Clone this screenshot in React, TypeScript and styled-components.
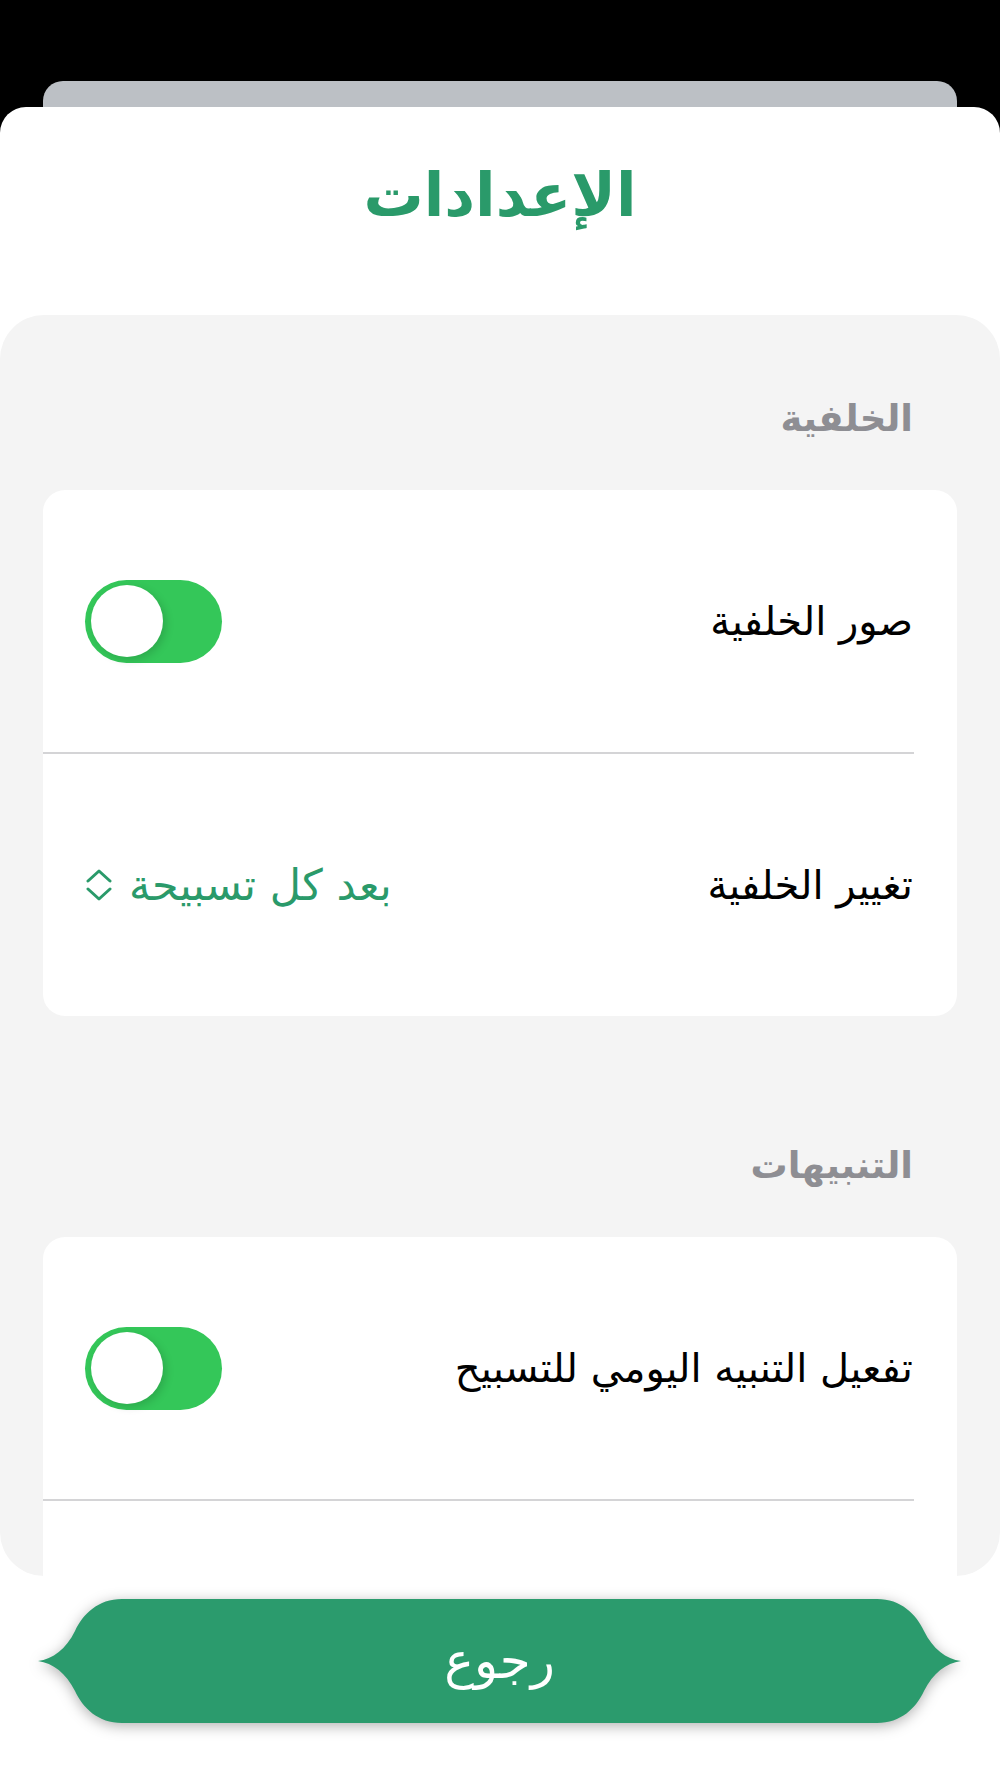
// شاشة الإعدادات

import React, { useState } from "react";
import styled, { createGlobalStyle } from "styled-components";

const GlobalStyle = createGlobalStyle`
  * { box-sizing: border-box; }
  body {
    margin: 0;
    background: #000;
    font-family: "DejaVu Sans", "Noto Sans", sans-serif;
  }
`;

const Toggle = ({ on, onChange }: { on: boolean; onChange: () => void }) => {
    return (
        <Track type="button" $on={on} onClick={onChange}>
            <Knob />
        </Track>
    );
};

const UpDown = () => (
    <svg width="28" height="32" viewBox="0 0 28 32" fill="none">
        <polyline points="3,12 14,2 25,12" stroke="#2a9a6a" strokeWidth="3" strokeLinecap="round" strokeLinejoin="round" />
        <polyline points="3,20 14,30 25,20" stroke="#2a9a6a" strokeWidth="3" strokeLinecap="round" strokeLinejoin="round" />
    </svg>
);

export default () => {
    const [images, setImages] = useState(true);
    const [daily, setDaily] = useState(true);

    return (
        <Page dir="rtl">
            <GlobalStyle />
            <BackCard />
            <Sheet>
                <Header>
                    <Title>الإعدادات</Title>
                </Header>
                <Content>
                    <SectionTitle $first>الخلفية</SectionTitle>
                    <Card>
                        <Row>
                            <Label>صور الخلفية</Label>
                            <Toggle on={images} onChange={() => setImages(!images)} />
                        </Row>
                        <Divider />
                        <Row>
                            <Label>تغيير الخلفية</Label>
                            <Picker type="button">
                                <span>بعد كل تسبيحة</span>
                                <UpDown />
                            </Picker>
                        </Row>
                    </Card>
                    <SectionTitle>التنبيهات</SectionTitle>
                    <Card>
                        <Row>
                            <Label>تفعيل التنبيه اليومي للتسبيح</Label>
                            <Toggle on={daily} onChange={() => setDaily(!daily)} />
                        </Row>
                        <Divider />
                        {/* الصف التالي مخفي تحت حافة القائمة */}
                        <Row />
                    </Card>
                </Content>
                <Footer>
                    <BackButton type="button">
                        <ButtonShape viewBox="0 0 923 124" preserveAspectRatio="none">
                            <path
                                d="M84,0 L839,0 C863,0 878,15 886,32 C895,50 908,60 923,62 C908,64 895,74 886,92 C878,109 863,124 839,124 L84,124 C60,124 45,109 37,92 C28,74 15,64 0,62 C15,60 28,50 37,32 C45,15 60,0 84,0 Z"
                                fill="#2b9b6d"
                            />
                        </ButtonShape>
                        <ButtonText>رجوع</ButtonText>
                    </BackButton>
                </Footer>
            </Sheet>
        </Page>
    );
};

const Page = styled.div`
  min-height: 1778px;
  padding-top: 81px;
  display: flex;
  flex-direction: column;
  background: #000;
`;

const BackCard = styled.div`
  height: 26px;
  margin: 0 43px;
  background: #bcc0c5;
  border-radius: 20px 20px 0 0;
`;

const Sheet = styled.div`
  flex: 1;
  display: flex;
  flex-direction: column;
  background: #fff;
  border-radius: 26px 26px 0 0;
`;

const Header = styled.div`
  height: 208px;
  padding-bottom: 32px;
  display: flex;
  justify-content: center;
  align-items: center;
`;

const Title = styled.h1`
  margin: 0;
  font-size: 60px;
  font-weight: bold;
  color: #2a9a6a;
`;

const Content = styled.div`
  height: 1261px;
  padding: 0 43px;
  background: #f4f4f4;
  border-radius: 44px;
  overflow: hidden;
`;

const SectionTitle = styled.div<{ $first?: boolean }>`
  height: 175px;
  margin-top: ${(p) => (p.$first ? "0" : "46px")};
  padding: 31px 44px 0;
  display: flex;
  align-items: center;
  font-size: 37px;
  font-weight: bold;
  color: #8e8e93;
`;

const Card = styled.div`
  background: #fff;
  border-radius: 22px;
`;

const Row = styled.div`
  height: 262px;
  padding: 0 44px 0 42px;
  display: flex;
  align-items: center;
  justify-content: space-between;
`;

const Label = styled.span`
  font-size: 40px;
  color: #000;
`;

const Divider = styled.div`
  height: 2px;
  margin-right: 43px;
  background: #d4d4d6;
`;

const Picker = styled.button`
  display: flex;
  align-items: center;
  gap: 16px;
  padding: 0 4px 0 0;
  border: none;
  background: none;
  font-family: inherit;
  font-size: 43px;
  color: #2a9a6a;
`;

const Track = styled.button<{ $on: boolean }>`
  width: 137px;
  height: 83px;
  padding: 5px 6px;
  border: none;
  border-radius: 42px;
  display: flex;
  align-items: center;
  justify-content: ${(p) => (p.$on ? "flex-end" : "flex-start")};
  background: ${(p) => (p.$on ? "#34c759" : "#e5e5ea")};
`;

const Knob = styled.span`
  width: 72px;
  height: 72px;
  border-radius: 50%;
  background: #fff;
  box-shadow: 3px 3px 8px rgba(0, 0, 0, 0.15);
`;

const Footer = styled.div`
  padding: 23px 39px 0 38px;
`;

const BackButton = styled.button`
  position: relative;
  width: 923px;
  height: 124px;
  padding: 0;
  border: none;
  background: none;
  display: flex;
  align-items: center;
  justify-content: center;
  filter: drop-shadow(0 3px 7px rgba(0, 0, 0, 0.3));
`;

const ButtonShape = styled.svg`
  position: absolute;
  inset: 0;
  width: 100%;
  height: 100%;
`;

const ButtonText = styled.span`
  position: relative;
  font-family: "DejaVu Sans", sans-serif;
  font-size: 50px;
  color: #fff;
`;
